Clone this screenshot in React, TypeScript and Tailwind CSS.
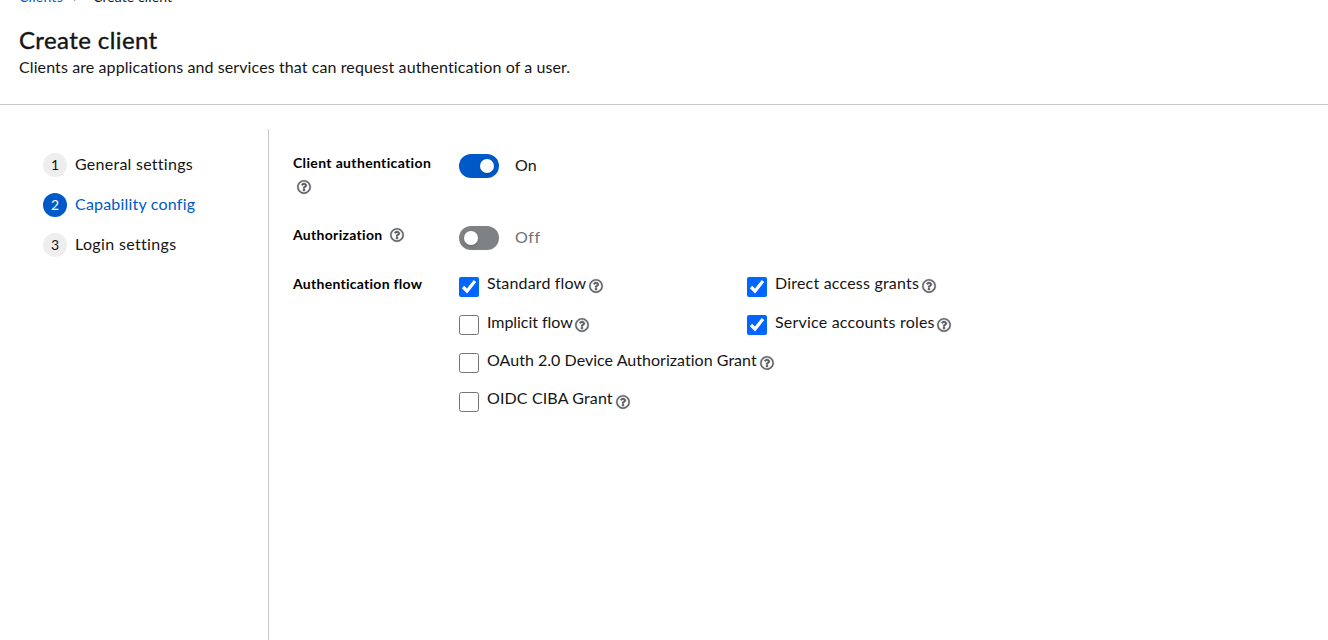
import { FaAngleRight, FaRegQuestionCircle } from "react-icons/fa";

function Help({ className = "" }: { className?: string }) {
  return (
    <button type="button" aria-label="Help" className={`block size-3.5 shrink-0 text-[#5a5d60] ${className}`}>
      <FaRegQuestionCircle className="size-3.5 overflow-visible stroke-current [stroke-width:14px]" />
    </button>
  );
}

type Step = { n: number; label: string; tracking: string; active?: boolean };

const steps: Step[] = [
  { n: 1, label: "General settings", tracking: "tracking-[0.26px]" },
  { n: 2, label: "Capability config", tracking: "tracking-[0.2px]", active: true },
  { n: 3, label: "Login settings", tracking: "tracking-[0.34px]" },
];

function Switch({ on }: { on: boolean }) {
  return (
    <div className="flex h-6 items-center">
      <button
        type="button"
        role="switch"
        aria-checked={on}
        className={`flex h-6 w-10 items-center rounded-full ${on ? "justify-end bg-[#0059c8] pr-[5px]" : "justify-start bg-[#7f8284] pl-[5px]"}`}
      >
        <span className="size-3.5 rounded-full bg-white shadow-[0_2px_4px_rgba(0,0,0,0.15)]" />
      </button>
      <span className={`-mt-0.5 ml-4 ${on ? "tracking-[0.2px] text-[#151515]" : "tracking-[0.6px] text-[#707070]"}`}>{on ? "On" : "Off"}</span>
    </div>
  );
}

function Check({ label, checked = false, tracking, width }: { label: string; checked?: boolean; tracking: string; width: string }) {
  return (
    <div className="flex items-start whitespace-nowrap">
      <input type="checkbox" defaultChecked={checked} aria-label={label} className="mt-1 size-5 shrink-0 accent-[#0066ff]" />
      <span className={`-mt-[1.33px] ml-2 shrink-0 leading-6 ${tracking} ${width}`}>{label}</span>
      <Help className="mt-[6.8px]" />
    </div>
  );
}

export default function App() {
  return (
    <div className="flex h-[640px] w-full flex-col overflow-hidden bg-white font-['Lato',sans-serif] text-base text-[#151515]">
      <header className="h-[105px] shrink-0 border-b border-[#c7c7c7] pl-[19px]">
        <nav className="-mt-[13px] flex h-5 items-center text-sm leading-5">
          <a href="#" className="w-[44px] whitespace-nowrap tracking-[0.25px] text-[#0059c8]">Clients</a>
          <FaAngleRight className="-mt-px ml-[7px] size-3 text-[#4d4d4d]" />
          <span className="ml-[11px] whitespace-nowrap tracking-[0.1px]">Create client</span>
        </nav>
        <h1 className="mt-[17px] h-8 text-2xl leading-8 tracking-[0.4px] [-webkit-text-stroke:0.4px_#151515]">Create client</h1>
        <p className="-mt-px h-6 leading-6 tracking-[0.1px]">Clients are applications and services that can request authentication of a user.</p>
      </header>
      <div className="flex min-h-0 grow pt-6">
        <nav className="w-[269px] shrink-0 border-r border-[#c7c7c7] pt-6 pl-[43px]">
          <ol className="flex flex-col gap-4">
            {steps.map((s) => (
              <li key={s.n} className="flex h-6 items-center">
                <span className={`flex size-6 items-center justify-center rounded-full text-sm ${s.active ? "bg-[#0059c8] text-white" : "bg-[#eeeeee]"}`}>
                  {s.n}
                </span>
                <span className={`-mt-0.5 ml-2 leading-6 ${s.tracking} ${s.active ? "text-[#0059c8]" : ""}`}>{s.label}</span>
              </li>
            ))}
          </ol>
        </nav>
        <main className="pl-6">
          <div className="grid grid-cols-[166px_auto] pt-[25px]">
            <div className="h-[72px] text-sm leading-5 font-bold text-black">
              <div className="-mt-px whitespace-nowrap tracking-[0.35px]">Client authentication</div>
              <Help className="mt-[7px] ml-1" />
            </div>
            <Switch on />
            <div className="flex h-[49px] text-sm leading-5 font-bold text-black">
              <span className="-mt-px w-[89px] whitespace-nowrap tracking-[0.3px]">Authorization</span>
              <Help className="mt-[2px] ml-2" />
            </div>
            <Switch on={false} />
            <div className="-mt-px text-sm leading-5 font-bold tracking-[0.27px] text-black">Authentication flow</div>
            <div className="-mt-[2.33px] grid auto-rows-[38.35px] grid-cols-[288px_auto]">
              <Check label="Standard flow" checked tracking="tracking-[0.15px]" width="w-[102px]" />
              <Check label="Direct access grants" checked tracking="tracking-[0.2px]" width="w-[147px]" />
              <Check label="Implicit flow" tracking="tracking-[-0.05px]" width="w-[88px]" />
              <Check label="Service accounts roles" checked tracking="tracking-[0.2px]" width="w-[162px]" />
              <div className="col-span-2">
                <Check label="OAuth 2.0 Device Authorization Grant" tracking="tracking-[0.03px]" width="w-[273px]" />
              </div>
              <div className="col-span-2">
                <Check label="OIDC CIBA Grant" tracking="tracking-[0.13px]" width="w-[129px]" />
              </div>
            </div>
          </div>
        </main>
      </div>
    </div>
  );
}
